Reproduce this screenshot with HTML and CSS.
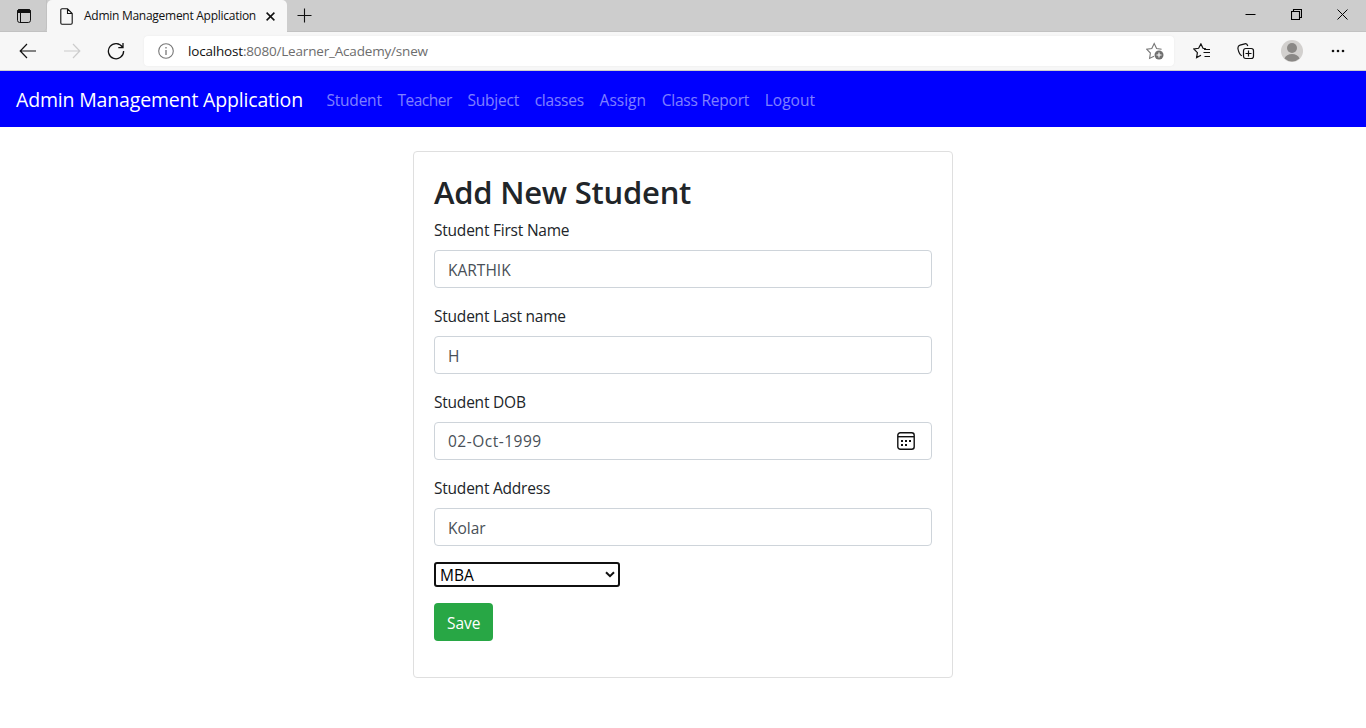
FILE: index.html
```html
<!DOCTYPE html>
<html lang="en">
<head>
<meta charset="utf-8">
<title>Admin Management Application</title>
<link rel="stylesheet" href="styles.css">
</head>
<body>
<header class="browser">
  <div class="tabstrip">
    <div class="tab-actions">
      <svg width="16" height="16" viewBox="0 0 16 16" fill="none" stroke="#111"><rect x="1.5" y="1.5" width="13" height="13" rx="2.2"/><path d="M1.5 3.5a2 2 0 0 1 2-2h9a2 2 0 0 1 2 2v1h-13z" fill="#111"/><path d="M4.5 5v9.5"/></svg>
    </div>
    <div class="tab">
      <svg width="13" height="17" viewBox="0 0 13 17" fill="none" stroke="#111" stroke-width="1.1"><path d="M2 .8h5.500l4.700 4.700V15a1.200 1.200 0 0 1-1.200 1.200H2A1.200 1.200 0 0 1 .8 15V2A1.200 1.200 0 0 1 2 .8zM7.500.8v4.700H12"/></svg>
      <span class="tab-title">Admin Management Application</span>
      <svg width="9" height="9" viewBox="0 0 9 9" stroke="#111" stroke-width="1.5"><path d="M.6.6l7.800 7.800M8.400.6L.6 8.400"/></svg>
    </div>
    <svg class="new-tab" width="15" height="15" viewBox="0 0 15 15" stroke="#111" stroke-width="1.100"><path d="M7.500.5v14M.5 7.500h14"/></svg>
    <div class="window-buttons">
      <svg width="11" height="11" viewBox="0 0 11 11" stroke="#000"><path d="M.5 5.500h10"/></svg>
      <svg width="11" height="11" viewBox="0 0 11 11" fill="none" stroke="#000" stroke-width="1.100"><path d="M.5 2.500h8v8h-8zM2.500 2.500v-2h8v8h-2"/></svg>
      <svg width="11" height="11" viewBox="0 0 11 11" stroke="#000"><path d="M.5.5l10 10M10.500.5l-10 10"/></svg>
    </div>
  </div>
  <div class="toolbar">
    <svg class="back" width="18" height="16" viewBox="0 0 18 16" fill="none" stroke="#111" stroke-width="1.200"><path d="M8 1L1.200 8 8 15M1.200 8H17"/></svg>
    <svg class="forward" width="18" height="16" viewBox="0 0 18 16" fill="none" stroke="#ccc" stroke-width="1.200"><path d="M10 1l6.800 7L10 15M16.800 8H1"/></svg>
    <svg class="reload" width="18" height="18" viewBox="0 0 18 18" fill="none" stroke="#111" stroke-width="1.300"><path d="M15.500 5.200A7.600 7.600 0 1 0 16.600 9M16 1v4.700h-4.700"/></svg>
    <div class="address">
      <svg width="16" height="16" viewBox="0 0 16 16" fill="none" stroke="#777" stroke-width="1.100"><circle cx="8" cy="8" r="7.300"/><path d="M8 7v5M8 4v1.500" stroke-width="1.300"/></svg>
      <span class="url"><span class="host">localhost</span>:8080/Learner_Academy/snew</span>
      <svg class="fav-add" width="18" height="18" viewBox="0 0 18 18" fill="none" stroke="#777" stroke-width="1.100"><path d="M8 14.200L3.600 16.400 4.400 11 .8 7.300 5.800 6.500 8.200 1.500 10.600 6.500 15.600 7.200"/><circle cx="13" cy="13" r="4.500" fill="#707070" stroke="none"/><path d="M13 10.500v5M10.500 13h5" stroke="#fff"/></svg>
    </div>
    <svg class="favs" width="18" height="16" viewBox="0 0 18 16" fill="none" stroke="#111" stroke-width="1.200"><path d="M8 12.300L3.600 14.600 4.400 9.600.8 6 5.600 5.300 7.900.9 10 5.300 13 5.800M11 6.500h6M10.500 9.500H17M11.500 13.500H17"/></svg>
    <svg class="collections" width="18" height="18" viewBox="0 0 18 18" fill="none" stroke="#111" stroke-width="1.200"><rect x="6.500" y="6.500" width="10" height="10" rx="2.200"/><path d="M11.500 8.500v6M8.500 11.500h6M4.800 13.800C3 12.800 1.500 9.500 1 7 .7 4.900 1.200 3.600 3 3.100L7.800 1.800C9.300 1.400 10.300 2.200 10.800 4"/></svg>
    <svg class="profile" width="22" height="22" viewBox="0 0 22 22"><circle cx="11" cy="11" r="11" fill="#d2d0ce"/><circle cx="11" cy="8" r="5" fill="#8a8886"/><path d="M3.500 18.500C4.500 15.500 7.500 14 11 14s6.500 1.500 7.500 4.500a11 11 0 0 1-15 0z" fill="#8a8886"/></svg>
    <svg class="more" width="14" height="4" viewBox="0 0 14 4" fill="#111"><circle cx="2" cy="2" r="1.300"/><circle cx="7" cy="2" r="1.300"/><circle cx="12" cy="2" r="1.300"/></svg>
  </div>
</header>
<nav class="navbar">
  <a class="brand">Admin Management Application</a>
  <div class="links">
    <a class="link">Student</a>
    <a class="link tight">Teacher</a>
    <a class="link">Subject</a>
    <a class="link">classes</a>
    <a class="link loose">Assign</a>
    <a class="link">Class Report</a>
    <a class="link loose">Logout</a>
  </div>
</nav>
<main class="card">
  <h2 class="title">Add New Student</h2>
  <div class="group"><div class="label">Student First Name</div><div class="field"><span>KARTHIK</span></div></div>
  <div class="group"><div class="label">Student Last name</div><div class="field"><span>H</span></div></div>
  <div class="group"><div class="label">Student DOB</div>
    <div class="field date"><span>02-Oct-1999</span>
      <svg width="18" height="18" viewBox="0 0 18 18" fill="none" stroke="#111" stroke-width="1.400"><rect x=".8" y=".8" width="16.400" height="16.400" rx="2.500"/><path d="M1 4.700h16"/><g fill="#111" stroke="none"><rect x="4" y="8" width="2" height="2"/><rect x="8" y="8" width="2" height="2"/><rect x="12" y="8" width="2" height="2"/><rect x="4" y="12" width="2" height="2"/><rect x="8" y="12" width="2" height="2"/></g></svg>
    </div>
  </div>
  <div class="group"><div class="label">Student Address</div><div class="field"><span>Kolar</span></div></div>
  <div class="select"><span>MBA</span>
    <svg width="10" height="7" viewBox="0 0 10 7" fill="none" stroke="#111" stroke-width="2"><path d="M1 1.200l4 4 4-4"/></svg>
  </div>
  <div class="save">Save</div>
</main>
</body>
</html>
```
FILE: styles.css
```css
* { box-sizing: border-box; }
body { margin: 0; height: 728px; overflow: hidden; background: #fff; color: #212529; font: 15.5px/24px "Open Sans", "Noto Sans", sans-serif; }
svg { display: block; flex: none; }

/* Browser window */
.browser { height: 71px; background: #f7f7f7; border-bottom: 1px solid #ccc; }
.tabstrip { display: flex; height: 32px; background: #cdcdcd; border-bottom: 1px solid #c2c2c2; }
.tab-actions { width: 47px; padding: 8px 0 0 16px; border-right: 1px solid #c2c2c2; border-bottom-right-radius: 4px; }
.tab { display: flex; align-items: center; width: 240px; height: 32px; padding: 0 12px 0 13px; background: #f7f7f7; border-radius: 5px 5px 0 0; }
.tab-title { width: 173px; margin: 0 9px 0 11px; color: #111; font-size: 12px; letter-spacing: -.27px; white-space: nowrap; }
.new-tab { margin: 8px 0 0 10px; }
.window-buttons { display: flex; gap: 35px; margin: 9px 18px 0 auto; }
.toolbar { display: flex; align-items: center; height: 38px; padding: 0 21px 0 19px; }
.forward { margin-left: 26px; }
.reload { margin-left: 26px; }
.address { display: flex; align-items: center; width: 1030px; height: 30px; margin-left: 19px; padding: 0 10px 0 14px; background: #fff; border-radius: 4px; box-shadow: 0 0 2px #e8e8e8; }
.url { margin-left: 14px; color: #6d6d6d; font-size: 13.5px; letter-spacing: -.18px; }
.host { color: #111; }
.fav-add { margin-left: auto; }
.favs { margin-left: 19px; }
.collections { margin-left: 26px; }
.profile { margin-left: 26px; }
.more { margin-left: auto; }

/* Site navigation */
.navbar { display: flex; align-items: center; height: 56px; padding: 1px 16px 0; background: #00f; }
.brand { width: 303px; padding-top: 1px; color: #fff; font-size: 19.5px; letter-spacing: -.17px; white-space: nowrap; }
.links { display: flex; gap: 15.7px; padding-left: 7.5px; }
.link { color: rgba(255, 255, 255, .5); letter-spacing: -.22px; white-space: nowrap; }
.link.tight { letter-spacing: -.5px; }
.link.loose { letter-spacing: 0; }

/* Student form */
.card { width: 540px; height: 527px; margin: 24px auto 0; padding: 20px; border: 1px solid #dfdfdf; border-radius: 4px; }
.title { margin: 0; padding-top: 1px; height: 46.4px; font-size: 31px; font-weight: 600; letter-spacing: -.24px; line-height: 38.4px; }
.group { margin-bottom: 16px; }
.label { margin-bottom: 8px; letter-spacing: -.22px; }
.field { display: flex; align-items: center; justify-content: space-between; height: 38px; padding: 2px 12px 0 13px; border: 1px solid #ced4da; border-radius: 4px; color: #495057; }
.field.date { padding: 0 16px 0 13px; letter-spacing: .5px; }
.select { display: flex; align-items: center; justify-content: space-between; width: 186px; height: 25px; padding: 0 3px 0 4px; border: 2px solid #101010; border-radius: 3px; color: #000; }
.select span { padding-top: 1px; }
.save { width: 59px; height: 38px; margin-top: 16px; padding: 8px 0 0 13px; border-radius: 4px; background: #28a745; color: #fff; }
```
